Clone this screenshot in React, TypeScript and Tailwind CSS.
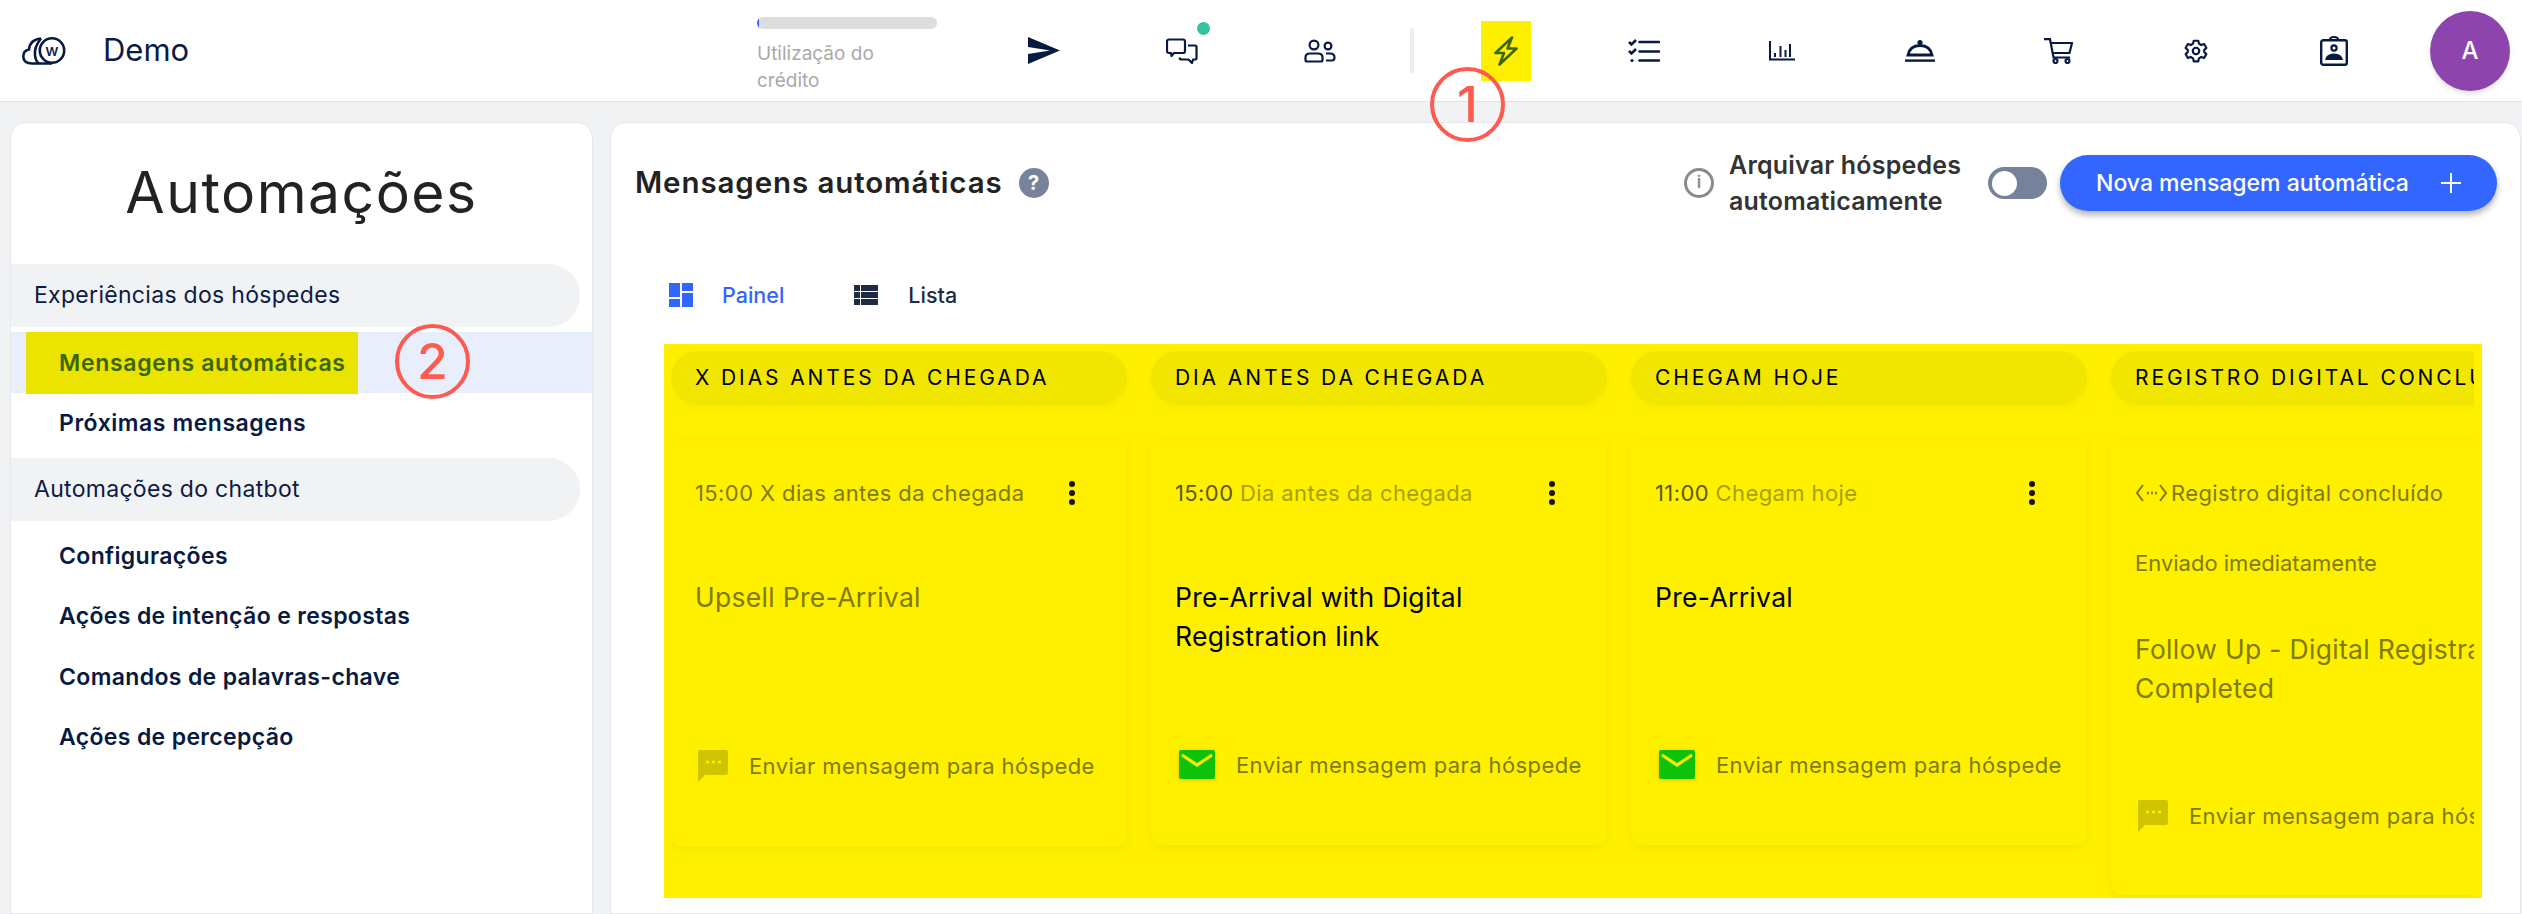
import React from 'react';

const navy = '#071a42';

const SendIcon = () => (
  <svg width="32" height="27" viewBox="0 0 32 27"><path d="M0 0 L32 13.5 L0 27 V17 L22 13.5 L0 10 Z" fill={navy} /></svg>
);

const ChatIcon = () => (
  <svg width="32" height="26" viewBox="0 0 32 26" fill="none" stroke={navy} strokeWidth="2.2" strokeLinejoin="round">
    <path d="M3 1.5 H17 Q19 1.5 19 3.5 V13 Q19 15 17 15 H8 L5.5 18 L5 15 H3 Q1 15 1 13 V3.5 Q1 1.5 3 1.5 Z" />
    <path d="M22 7.5 H29 Q30.5 7.5 30.5 9 V20 Q30.5 21.5 29 21.5 H27 L26 25 L22.5 21.5 H15 L13 20" />
  </svg>
);

const UsersIcon = () => (
  <svg width="32" height="24" viewBox="0 0 32 24" fill="none" stroke={navy} strokeWidth="2.2">
    <circle cx="10" cy="6" r="4.4" />
    <circle cx="24" cy="7" r="3.4" />
    <path d="M1.5 21 V18.5 Q1.5 14.5 6 14.5 H14 Q18.5 14.5 18.5 18.5 V21 Q18.5 22.5 17 22.5 H3 Q1.5 22.5 1.5 21 Z" />
    <path d="M22 14.5 H26 Q30.5 14.5 30.5 18.5 Q30.5 21.5 28 21.5 H22" />
  </svg>
);

const BoltIcon = () => (
  <svg width="24" height="30" viewBox="0 0 24 30" fill="none" stroke="#3a6600" strokeWidth="2.6" strokeLinejoin="round">
    <path d="M18 1.5 L1.5 17 H10 L5.5 28.5 L22.5 12.5 H13.5 Z" />
  </svg>
);

const TasksIcon = () => (
  <svg width="32" height="24" viewBox="0 0 32 24" fill="none" stroke={navy} strokeWidth="2.6">
    <path d="M1 3 L3.5 5.5 L8 1 M1 12 L3.5 14.5 L8 10" />
    <circle cx="4" cy="21.5" r="1.6" fill={navy} stroke="none" />
    <path d="M11.5 3 H31 M11.5 12.5 H31 M11.5 21.5 H31" strokeLinecap="round" />
  </svg>
);

const ChartIcon = () => (
  <svg width="26" height="20" viewBox="0 0 26 20" fill="none" stroke={navy} strokeWidth="2">
    <path d="M1 0 V18.5 H26" />
    <path d="M6 12 V16 M11.5 5 V16 M16.5 9 V16 M21 3 V16" />
  </svg>
);

const BellIcon = () => (
  <svg width="30" height="22" viewBox="0 0 30 22" fill="none" stroke={navy} strokeWidth="2.4">
    <circle cx="15" cy="2.6" r="2.6" fill={navy} stroke="none" />
    <path d="M3 15 Q5 5.5 15 5.5 Q25 5.5 27 15 Z" strokeWidth="2.8" />
    <path d="M0 20.6 H30" />
  </svg>
);

const CartIcon = () => (
  <svg width="29" height="26" viewBox="0 0 29 26" fill="none" stroke={navy} strokeWidth="2.2">
    <path d="M0 1.2 H6 L9.5 19.5 H26" />
    <path d="M7 5 H28 L25.5 15 H9" />
    <circle cx="11.5" cy="23" r="2" />
    <circle cx="23.5" cy="23" r="2" />
  </svg>
);

const GearIcon = () => (
  <svg width="26" height="26" viewBox="0 0 24 24" fill="none" stroke={navy} strokeWidth="2" strokeLinejoin="round">
    <path d="M9.9 2.5 H14.1 L14.7 5.2 L16.9 6.5 L19.5 5.6 L21.6 9.2 L19.6 11 V13 L21.6 14.8 L19.5 18.4 L16.9 17.5 L14.7 18.8 L14.1 21.5 H9.9 L9.3 18.8 L7.1 17.5 L4.5 18.4 L2.4 14.8 L4.4 13 V11 L2.4 9.2 L4.5 5.6 L7.1 6.5 L9.3 5.2 Z" />
    <circle cx="12" cy="12" r="3" />
  </svg>
);

const BadgeIcon = () => (
  <svg width="28" height="30" viewBox="0 0 28 30" fill="none" stroke={navy} strokeWidth="2.4">
    <rect x="1.2" y="4.2" width="25.6" height="24.6" rx="2" />
    <path d="M9.5 4 Q10 1 14 1 Q18 1 18.5 4" strokeWidth="2" />
    <circle cx="14" cy="12" r="2.6" strokeWidth="2.2" />
    <path d="M5 24 Q6 17.5 14 17.5 Q22 17.5 23 24 Z" fill={navy} stroke="none" />
  </svg>
);

const Logo = () => (
  <svg width="44" height="28" viewBox="0 0 44 28" fill="none" stroke={navy} strokeWidth="2.6" strokeLinejoin="round">
    <circle cx="30" cy="13.5" r="12.2" />
    <path d="M30 26.5 H10 Q1.3 26.5 1.3 19.5 Q1.3 13.5 7 12.5 Q8 2.5 19 1.5" />
    <path d="M19 1.5 Q12 10 13 18 Q13.5 24 17 26.5" />
    <text x="30" y="19" textAnchor="middle" fontSize="16" fontWeight="500" fill={navy} stroke="none">w</text>
  </svg>
);

const MessageIcon = () => (
  <svg width="30" height="32" viewBox="0 0 30 32" className="shrink-0">
    <path d="M2 0 H28 Q30 0 30 2 V23 Q30 25 28 25 H7 L0 32 V2 Q0 0 2 0 Z" fill="#cfc400" />
    <path d="M8 12 h3 M14 12 h3 M20 12 h3" stroke="#fff000" strokeWidth="2.4" />
  </svg>
);

const MailIcon = () => (
  <svg width="36" height="30" viewBox="0 0 36 30" className="shrink-0 drop-shadow-sm">
    <rect width="36" height="29" rx="2" fill="#0ec20a" />
    <path d="M3 5 L18 15 L33 5" fill="none" stroke="#f5ea00" strokeWidth="3.2" />
  </svg>
);

const WebhookIcon = () => (
  <svg width="33" height="22" viewBox="0 0 33 22" fill="none" stroke="#807a00" strokeWidth="2" className="shrink-0 mr-[3px]">
    <path d="M8 3 L2 11 L8 19 M25 3 L31 11 L25 19" />
    <path d="M12 11 h2 M16 11 h2 M20 11 h2" strokeWidth="2.4" />
  </svg>
);

const Kebab = () => (
  <div className="flex flex-col gap-[3px] mr-[52px]">
    <span className="size-[6px] rounded-full bg-[#161400]" />
    <span className="size-[6px] rounded-full bg-[#161400]" />
    <span className="size-[6px] rounded-full bg-[#161400]" />
  </div>
);

const columns = [
  { header: 'X dias antes da chegada', time: '15:00', when: 'X dias antes da chegada', title: 'Upsell Pre-Arrival', muted: true, mail: false },
  { header: 'Dia antes da chegada', time: '15:00', when: 'Dia antes da chegada', title: 'Pre-Arrival with Digital Registration link', muted: false, mail: true },
  { header: 'Chegam hoje', time: '11:00', when: 'Chegam hoje', title: 'Pre-Arrival', muted: false, mail: true },
];

const navIcons = [
  <SendIcon key="send" />,
  <div key="chat" className="relative flex">
    <ChatIcon />
    <span className="absolute -right-[12px] -top-[16px] size-[13px] rounded-full bg-[#36c19f]" />
  </div>,
  <UsersIcon key="users" />,
];

const navIconsRight = [<TasksIcon key="t" />, <ChartIcon key="c" />, <BellIcon key="b" />, <CartIcon key="ca" />, <GearIcon key="g" />, <BadgeIcon key="ba" />];

const Slot: React.FC<{ children: React.ReactNode }> = ({ children }) => (
  <div className="flex w-[138px] items-center justify-center">{children}</div>
);

const Header = () => (
  <header className="flex h-[102px] shrink-0 items-center justify-between border-b border-[#e0e2e6] bg-white pr-[12px]">
    <div className="flex items-center pl-[22px]">
      <Logo />
      <span className="ml-[37px] text-[31px] text-[#0b1b45]">Demo</span>
    </div>
    <div className="flex h-full items-center">
      <div className="mr-[38px] mt-[17px] w-[180px] self-start">
        <div className="h-[12px] overflow-hidden rounded-full bg-[#dddddd]">
          <div className="h-full w-[2px] bg-[#3366ff]" />
        </div>
        <div className="mt-[11px] text-[19px] leading-[27px] text-[#a9a9a9]">Utilização do<br />crédito</div>
      </div>
      {navIcons.map((icon, i) => <Slot key={i}>{icon}</Slot>)}
      <div className="ml-[21px] mr-[23px] h-[45px] w-[4px] bg-[#eeeff2]" />
      <div className="flex w-[138px] justify-center">
        <div className="flex h-[60px] w-[50px] items-center justify-center bg-[#fff000]"><BoltIcon /></div>
      </div>
      {navIconsRight.map((icon, i) => <Slot key={i}>{icon}</Slot>)}
      <div className="ml-[27px] flex size-[80px] items-center justify-center rounded-full bg-[#8e44ad] text-[24px] font-medium text-white shadow-md">A</div>
    </div>
  </header>
);

const subItem = 'flex h-[60.5px] items-center pl-[48px] text-[23px] font-semibold tracking-[0.35px] text-[#071a42]';
const groupPill = 'flex h-[63px] w-[569px] items-center rounded-r-[32px] bg-[#f1f2f4] pl-[23px] text-[23px] tracking-[0.3px] text-[#0b1b45]';

const Sidebar = () => (
  <aside className="w-[583px] shrink-0 rounded-t-2xl border border-[#e5e7eb] bg-white">
    <h1 className="mt-[35px] text-center text-[57px] leading-[70px] tracking-[1.5px] text-[#222222]">Automações</h1>
    <div className={`${groupPill} mt-[36px]`}>Experiências dos hóspedes</div>
    <div className="mt-[5px] h-[61px] bg-[#e8eefc] pl-[15px]">
      <div className="flex h-[62px] w-[332px] items-center bg-[#ebe300] pl-[33px] text-[23px] font-semibold tracking-[0.7px] text-[#3a6600]">Mensagens automáticas</div>
    </div>
    <div className={`${subItem} tracking-[0.55px]`}>Próximas mensagens</div>
    <div className={`${groupPill} mt-[4px]`}>Automações do chatbot</div>
    <div className="mt-[5px]">
      <div className={subItem}>Configurações</div>
      <div className={subItem}>Ações de intenção e respostas</div>
      <div className={subItem}>Comandos de palavras-chave</div>
      <div className={subItem}>Ações de percepção</div>
    </div>
  </aside>
);

const ColumnHead: React.FC<{ label: string }> = ({ label }) => (
  <div className="flex h-[54px] w-[456px] items-center whitespace-nowrap rounded-[27px] bg-[#f0e600] pl-[24px] text-[21px] uppercase tracking-[2.9px] text-black shadow-[0_3px_8px_rgba(0,0,0,0.03)]">
    {label}
  </div>
);

const SendLabel: React.FC<{ mail: boolean }> = ({ mail }) => (
  <div className={`flex items-center gap-[21px] whitespace-nowrap text-[22px] leading-[30px] tracking-[0.4px] text-[#807a00] ${mail ? 'pl-[4px]' : 'pl-[3px]'}`}>
    {mail ? <MailIcon /> : <MessageIcon />}
    <span>Enviar mensagem para hóspede</span>
  </div>
);

const cardClass = 'mt-[35px] w-[456px] rounded-b-xl bg-[#fff000] pl-[24px] shadow-[0_3px_10px_rgba(0,0,0,0.05)]';

const Card: React.FC<{ col: (typeof columns)[number] }> = ({ col }) => (
  <div className={`${cardClass} pt-[38px] pb-[65px]`}>
    <div className="flex h-[30px] items-center justify-between whitespace-nowrap text-[22px] tracking-[0.4px]">
      {col.muted ? (
        <span className="text-[#807a00]">{col.time} {col.when}</span>
      ) : (
        <span><span className="text-[#5c5700]">{col.time}</span> <span className="text-[#a89f00]">{col.when}</span></span>
      )}
      <Kebab />
    </div>
    <div className={`mt-[70px] h-[78px] pr-[24px] text-[26.5px] leading-[39px] tracking-[0.3px] ${col.muted ? 'text-[#807a00]' : 'text-black'}`}>{col.title}</div>
    <div className="mt-[94px]"><SendLabel mail={col.mail} /></div>
  </div>
);

const Board = () => (
  <div className="ml-[29px] mt-[37px] h-[554px] w-[1818px] overflow-hidden bg-[#fff000] pl-[7px] pr-[8px] pt-[7px]">
    <div className="flex h-full gap-[24px] overflow-hidden">
      {columns.map((col) => (
        <div key={col.header} className="w-[456px] shrink-0">
          <ColumnHead label={col.header} />
          <Card col={col} />
        </div>
      ))}
      <div className="w-[456px] shrink-0">
        <ColumnHead label="Registro digital concluído" />
        <div className={`${cardClass} pt-[38px] pb-[63px]`}>
          <div className="flex h-[30px] items-center whitespace-nowrap text-[22px] tracking-[0.4px] text-[#807a00]"><WebhookIcon />Registro digital concluído</div>
          <div className="mt-[40px] h-[30px] text-[22px] leading-[30px] text-[#807a00]">Enviado imediatamente</div>
          <div className="mt-[52px] h-[78px] pr-[24px] text-[26.5px] leading-[39px] tracking-[0.3px] text-[#807a00]">Follow Up - Digital Registration Completed</div>
          <div className="mt-[92px]"><SendLabel mail={false} /></div>
        </div>
      </div>
    </div>
  </div>
);

const Main = () => (
  <main className="ml-[17px] flex-1 rounded-t-2xl border border-[#e5e7eb] bg-white pl-[24px] pr-[23px] pt-[32px]">
    <div className="flex h-[56px] items-center justify-between">
      <div className="flex items-center gap-[16px]">
        <h2 className="-mt-[2px] text-[29.5px] font-semibold tracking-[0.9px] text-[#222222]">Mensagens automáticas</h2>
        <span className="flex size-[30px] items-center justify-center rounded-full bg-[#77839a] text-[20px] font-bold text-white">?</span>
      </div>
      <div className="flex items-center">
        <span className="flex size-[30px] items-center justify-center rounded-full border-[3px] border-[#8a8a8a] text-[17px] font-semibold text-[#8a8a8a]">i</span>
        <div className="ml-[15px] w-[259px] text-[25px] font-semibold leading-[36px] tracking-[0.2px] text-[#333333]">Arquivar hóspedes automaticamente</div>
        <div className="flex h-[32px] w-[59px] items-center rounded-full bg-[#76819a] pl-[4px]">
          <span className="size-[25px] rounded-full bg-white" />
        </div>
        <button className="ml-[13px] flex h-[56px] w-[437px] items-center justify-between whitespace-nowrap rounded-[28px] bg-[#3366ff] pl-[36px] pr-[36px] text-[23px] font-medium text-white shadow-[0_4px_6px_rgba(0,0,0,0.3)]">
          <span>Nova mensagem automática</span>
          <svg width="20" height="20" viewBox="0 0 20 20" stroke="#ffffff" strokeWidth="2"><path d="M10 0 V20 M0 10 H20" /></svg>
        </button>
      </div>
    </div>
    <div className="ml-[34px] mt-[72px] flex h-[24px] items-center text-[21.5px]">
      <svg width="24" height="24" viewBox="0 0 24 24" fill="#3366ff"><path d="M0 0 H11 V14 H0 Z M13 0 H24 V8 H13 Z M13 10 H24 V24 H13 Z M0 16 H11 V24 H0 Z" /></svg>
      <span className="ml-[29px] font-medium text-[#3366ff]">Painel</span>
      <svg className="ml-[70px]" width="24" height="20" viewBox="0 0 24 20" fill="#1f2a44"><path d="M0 0 H6 V6 H0 Z M7 0 H24 V6 H7 Z M0 7 H6 V13 H0 Z M7 7 H24 V13 H7 Z M0 14 H6 V20 H0 Z M7 14 H24 V20 H7 Z" /></svg>
      <span className="ml-[30px] font-medium text-[#1f2a44]">Lista</span>
    </div>
    <Board />
  </main>
);

const Callout: React.FC<{ label: string; className: string }> = ({ label, className }) => (
  <div className={`absolute flex size-[75px] items-center justify-center rounded-full border-[4px] border-[#ff5a4f] text-[50px] font-medium text-[#ff5a4f] [text-shadow:0_0_2px_#ffffff] ${className}`}>
    {label}
  </div>
);

export default function App() {
  return (
    <div className="relative flex h-[914px] flex-col overflow-hidden bg-[#f1f2f4] font-[family-name:Inter,sans-serif]">
      <Header />
      <div className="flex min-h-0 flex-1 pl-[10px] pt-[20px] pr-[1px]">
        <Sidebar />
        <Main />
      </div>
      <Callout label="1" className="left-[1430px] top-[67px]" />
      <Callout label="2" className="left-[395px] top-[324px]" />
    </div>
  );
}
